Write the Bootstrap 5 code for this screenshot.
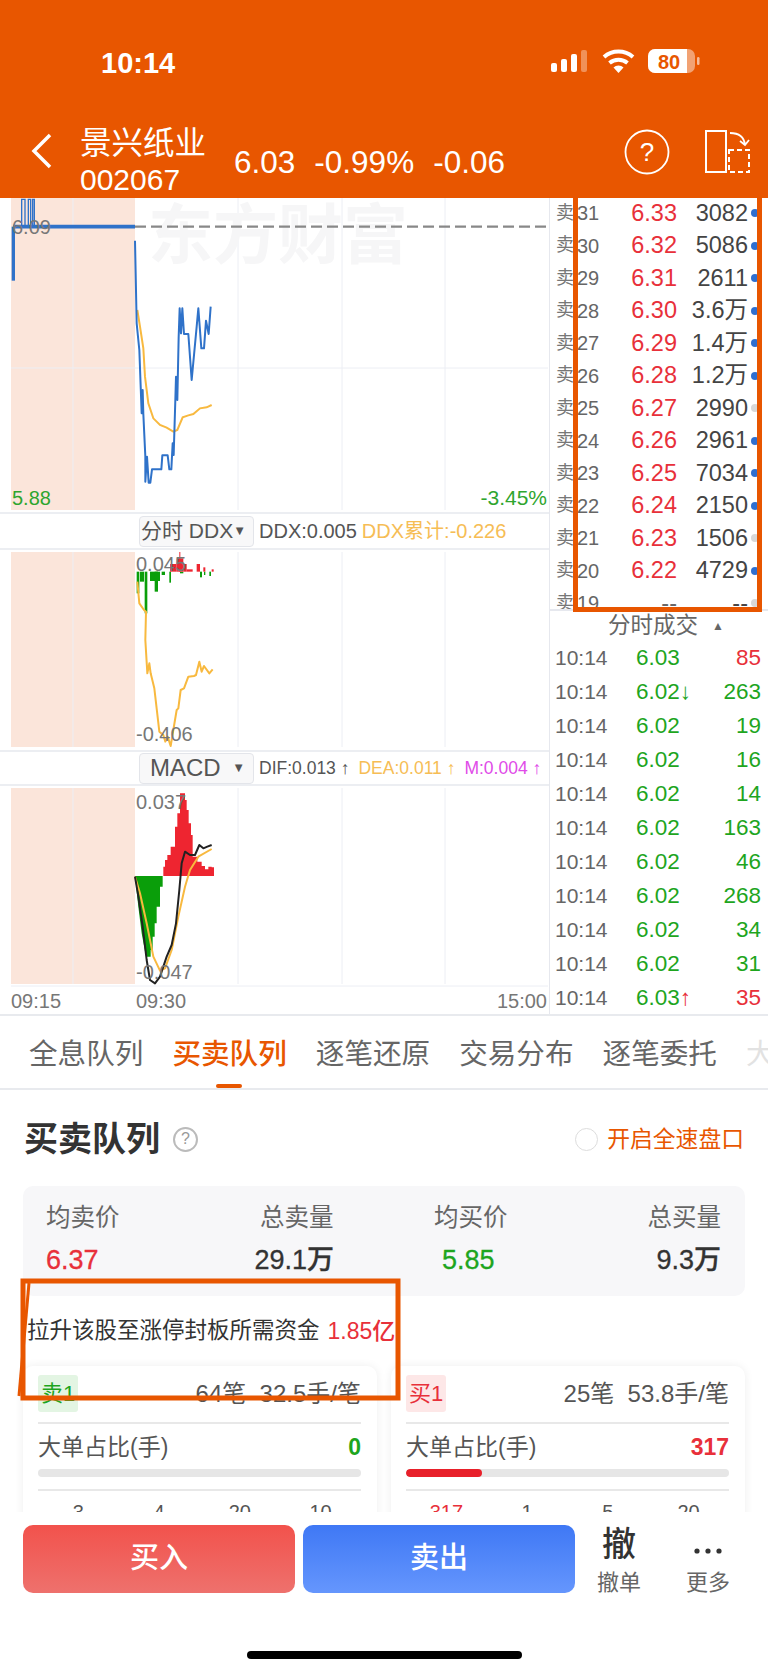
<!DOCTYPE html>
<html lang="zh">
<head>
<meta charset="utf-8">
<title>景兴纸业</title>
<link href="https://cdn.jsdelivr.net/npm/bootstrap@5.3.0/dist/css/bootstrap.min.css" rel="stylesheet">
<style>
html,body{margin:0;background:#fff}
body{font-family:"Liberation Sans","Noto Sans CJK SC",sans-serif;color:#333}
.app{width:768px;height:1672px;overflow:hidden;position:relative;background:#fff}
.hdr{height:198px;background:#e85600;color:#fff;flex:none}
.stbar{height:125px;padding:47px 0 0 101px}
.clock{font-size:29px;font-weight:700;line-height:32px;width:85px}
.status-icons{margin-right:62px}
.navline{height:73px;padding-left:30px}
.stk-name{font-size:31.5px;line-height:42px;margin-top:-3px}
.stk-code{font-size:30px;line-height:30px;margin-top:1px}
.stk-nums{font-size:31.500px;margin-left:28px;gap:19px;padding-top:14px}
.nav-tools{margin-right:18px;margin-top:3px}
.quotes{height:816px;flex:none}
.leftcol{width:549px;flex:none}
.rightcol{width:219px;flex:none;border-left:1px solid #e6e8ee}
.plot{display:block;width:548px}
.indbar{border-top:2px solid #eceef2;border-bottom:2px solid #eceef2;gap:5px;padding-left:139px;font-size:20px;white-space:nowrap}
.indbar-a{height:38px}
.indbar-b{height:36px;font-size:17.5px}
.dropbtn{width:115px;height:31px;border:1px solid #e3e5ea;background:#f8f8f9;border-radius:4px;font-size:21px;color:#555;padding:0 8px 0 1px}
.dropbtn i{font-style:normal;font-size:13px;color:#555}
.macd-t{font-size:24px;padding-left:9px}
.c-gold{color:#f6bd55}.c-mag{color:#e04be8}.c-dim{color:#555}
.ind-gap{gap:9px}
.book{height:413px;overflow:hidden;border-bottom:2px solid #e6e8ee}
.bk-row{height:32.5px;font-size:23.5px;white-space:nowrap;color:#444;padding-left:6px;position:relative;top:-1px}
.bk-s{width:21px;font-size:18px;color:#777}
.bk-n{width:30px;font-size:20px;color:#666}
.bk-p{width:70px;text-align:right;color:#e8303a}
.bk-v{width:71px;text-align:right}
.bk-d{width:8px;height:8px;border-radius:50%;background:#2f6fd0;margin-left:3px}
.bk-d.off{background:#d8d8d8}
.bk-none{color:#666}
.tr-head{height:30px;font-size:22.5px;color:#666;gap:14px;padding-left:14px}
.tr-head i{font-style:normal;font-size:12px}
.tr-row{height:34px;font-size:22.500px;white-space:nowrap;padding:0 7px 0 5px}
.tr-t{width:81px;color:#666;font-size:21px}
.tr-p{color:#1ea51e}
.tr-v{text-align:right}
.c-up{color:#e8303a}.c-dn{color:#1ea51e}
.lower{height:498px;overflow:hidden;flex:none;border-top:2px solid #e8eaee}
.tabs{height:74px;border-bottom:2px solid #e8eaee;padding:5px 0 0 29px;gap:29px;font-size:28.6px;color:#666;white-space:nowrap;overflow:hidden;position:relative}
.tab-on{color:#e85600;font-weight:500;position:relative}
.tab-on::after{content:"";position:absolute;left:44px;bottom:-12px;width:26px;height:4px;border-radius:2px;background:#e85600}
.tab-fade{color:#e2e2e2}
.secrow{height:50px;margin:24px 24px 22px 24px}
.sec-h{font-size:34px;font-weight:700;color:#333;line-height:50px}
.qmark{width:25px;height:25px;border:2px solid #bbb;border-radius:50%;font-size:16px;color:#999;margin-left:13px}
.radio-o{width:23px;height:23px;border:1.5px solid #ddd;border-radius:50%;margin-right:9px}
.fast{font-size:22.8px;color:#e85600}
.stat{height:110px;margin:0 23px;background:#f7f7f9;border-radius:10px;padding:16px 24px 0 23px}
.st-a{width:214px}.st-b{width:174px}.st-c{width:213px}.st-d{width:74px}
.st-l{font-size:24.5px;color:#666;line-height:32px;white-space:nowrap}
.st-v{font-size:27px;font-weight:500;line-height:34px;margin-top:9px;-webkit-text-stroke:.3px currentColor;white-space:nowrap}
.st-mid{margin-left:-10px;width:84px}
.pull{height:70px;padding-left:27px;font-size:22.5px;color:#333}
.pull b{color:#e8303a;font-weight:500;margin-left:8px;font-size:23px}
.duo{gap:14px;padding:0 23px}
.qcard{width:354px;height:170px;background:#fff;border-radius:10px;box-shadow:0 0 10px rgba(0,0,0,.07);padding:10px 16px 0 15px}
.qc-top{height:48px;border-bottom:2px solid #e8e8e8;padding-bottom:11px;font-size:24px;line-height:30px;color:#555}
.qtag{width:40px;height:37px;border-radius:3px;font-size:22px}
.qtag-s{background:#e3f5e3;color:#1ea51e}
.qtag-b{background:#fde7e7;color:#e8303a}
.qc-mid{height:46px;font-size:23px;line-height:30px;color:#555}
.qc-mid b{font-weight:700;font-size:23px}
.qbar{height:8px;background:#e6e6e6;border-radius:4px;overflow:hidden;margin-top:-1px}
.qbar div{height:8px;background:#e8202a;border-radius:4px}
.qc-rule{border-top:2px solid #e8e8e8;margin-top:12px;padding-top:6px;font-size:20px;color:#555}
.qc-rule span{width:25%;text-align:center}
.foot{height:160px;flex:none;background:#fff;padding:13px 0 0 23px}
.act{width:272px;height:68px;border-radius:10px;color:#fff;font-size:29px;font-weight:500;border:0}
.act-r{background:linear-gradient(#f2524c,#ee716d)}
.act-b{background:linear-gradient(#3f78f5,#6596fd);margin-left:8px}
.foot-i{color:#666;font-size:22px;line-height:28px;text-align:center;white-space:nowrap}
.foot-i strong{display:block;font-size:34px;line-height:38px;color:#333;font-weight:500;height:44px}
.fi-1{width:60px;margin-left:14px}
.fi-2{width:60px;margin-left:29px}
.home{width:275px;height:8px;border-radius:4px;background:#000;margin:54px 0 0 224px}
.mark-box{position:absolute;left:573px;top:190px;width:189px;height:422px;border:5px solid #e85600;border-top:0;pointer-events:none}
.mark-svg{position:absolute;left:0;top:1270px;pointer-events:none}
svg text{font-family:"Liberation Sans","Noto Sans CJK SC",sans-serif}
</style>
</head>
<body>
<div class="app d-flex flex-column">
  <header class="hdr">
    <div class="stbar d-flex">
      <div class="clock">10:14</div>
      <svg class="ms-auto status-icons" width="155" height="32" viewBox="0 0 155 32">
        <g fill="#fff"><rect x="0" y="16" width="6" height="9" rx="2"/><rect x="10" y="12" width="6" height="13" rx="2"/><rect x="20" y="7" width="6" height="18" rx="2"/><rect x="30" y="3" width="6" height="22" rx="2" opacity=".35"/></g>
        <g fill="none" stroke="#fff" stroke-width="4" stroke-linecap="butt"><path d="M53 10a22 22 0 0 1 29 0"/><path d="M58.500 16a14 14 0 0 1 18 0"/></g>
        <path d="M62.500 20.500a7 7 0 0 1 10 0L67.500 26z" fill="#fff"/>
        <rect x="97" y="2" width="47" height="24" rx="7" fill="#fff" opacity=".45"/>
        <path d="M104 2h32v24h-32a7 7 0 0 1-7-7V9a7 7 0 0 1 7-7z" fill="#fff"/>
        <rect x="146" y="10" width="2.500" height="8" rx="1.200" fill="#fff" opacity=".6"/>
        <text x="118" y="22" font-size="20" font-weight="700" fill="#e85600" text-anchor="middle">80</text>
      </svg>
    </div>
    <div class="navline d-flex">
      <svg width="22" height="36" viewBox="0 0 22 36" class="mt-2"><path d="M20 2 4 18l16 16" fill="none" stroke="#fff" stroke-width="3.500"/></svg>
      <div class="ms-4 ps-1">
        <div class="stk-name">景兴纸业</div>
        <div class="stk-code">002067</div>
      </div>
      <div class="stk-nums d-flex"><span>6.03</span><span>-0.99%</span><span>-0.06</span></div>
      <svg class="ms-auto nav-tools" width="128" height="50" viewBox="0 0 128 50">
        <circle cx="25" cy="24" r="21.500" fill="none" stroke="#fff" stroke-width="1.800"/>
        <text x="25" y="33" font-size="26" fill="#fff" text-anchor="middle">?</text>
        <rect x="84" y="3" width="20" height="41" fill="none" stroke="#fff" stroke-width="2"/>
        <rect x="107" y="22" width="20" height="22" fill="none" stroke="#fff" stroke-width="2" stroke-dasharray="5 3"/>
        <path d="M108 5c8 0 14 3 15 12m-5-4 5 4 4-5" fill="none" stroke="#fff" stroke-width="1.800"/>
      </svg>
    </div>
  </header>

  <section class="quotes d-flex">
    <div class="leftcol">
      <svg class="plot" height="314" viewBox="0 24 1644 942">
        <rect x="33" y="24" width="372" height="936" fill="#fbe5da"/>
        <g stroke="#eceef4" stroke-width="3"><path d="M219 24V960M714 24V960M1026 24V960M1335 24V960M33 534H1644"/></g>
        <text x="444" y="204" font-size="195" font-weight="700" fill="#f6f6f7">东方财富</text>
        <path d="M405 110H1644" stroke="#888" stroke-width="7" stroke-dasharray="33 15"/>
        <path d="M40 110H405" stroke="#2f72c9" stroke-width="11"/>
        <path d="M40 272V110" stroke="#2f72c9" stroke-width="10" fill="none"/>
        <path d="M65 110V28H75V110M85 110V28H92V110M98 110V28H103V110" stroke="#2f72c9" stroke-width="4" fill="none"/>
        <polyline fill="none" stroke="#f8b93f" stroke-width="6" points="412,360 420,410 430,475 435,560 445,640 460,685 480,705 500,713 520,725 532,720 548,682 565,676 580,672 600,655 620,652 635,645"/>
        <polyline fill="none" stroke="#2f72c9" stroke-width="6" stroke-linejoin="round" points="405,152 410,400 418,480 425,670 428,600 430,672 436,800 436,875 441,800 446,878 451,878 456,838 484,838 487,796 503,796 508,838 514,838 518,760 521,795 526,630 528,560 532,630 536,440 539,355 543,430 547,355 552,432 565,432 575,570 590,410 595,355 604,475 612,475 618,392 626,432 632,350"/>
        <text x="36" y="131" font-size="60" fill="#777">6.09</text>
        <text x="36" y="945" font-size="60" fill="#2fa52f">5.88</text>
        <text x="1641" y="945" font-size="63" fill="#2fa52f" text-anchor="end">-3.45%</text>
      </svg>
      <div class="indbar indbar-a d-flex align-items-center">
        <div class="dropbtn d-flex align-items-center justify-content-between"><span>分时 DDX</span><i>▼</i></div>
        <span class="c-dim">DDX:0.005</span><span class="c-gold">DDX累计:-0.226</span>
      </div>
      <svg class="plot" height="200" viewBox="-360 30 1644 600">
        <rect x="-327" y="36" width="372" height="585" fill="#fbe5da"/>
        <g stroke="#eceef4" stroke-width="3"><path d="M-141 36V621M354 36V621M666 36V621M975 36V621"/></g>
        <g fill="#0a9e0a"><rect x="50" y="95" width="8" height="65"/><rect x="60" y="95" width="12" height="30"/><rect x="74" y="95" width="8" height="125"/><rect x="90" y="95" width="30" height="28"/><rect x="104" y="95" width="10" height="60"/><rect x="125" y="95" width="10" height="10"/><rect x="148" y="95" width="5" height="33"/><rect x="180" y="95" width="10" height="5"/><rect x="240" y="95" width="6" height="17"/><rect x="252" y="95" width="4" height="10"/><rect x="268" y="95" width="5" height="13"/></g>
        <g fill="#ee2530"><rect x="150" y="72" width="20" height="23"/><rect x="178" y="36" width="3" height="59"/><rect x="170" y="55" width="20" height="40"/><rect x="190" y="72" width="10" height="23"/><rect x="200" y="88" width="18" height="7"/><rect x="230" y="72" width="10" height="23"/><rect x="250" y="82" width="6" height="13"/><rect x="275" y="88" width="6" height="7"/></g>
        <polyline fill="none" stroke="#f8b93f" stroke-width="6" stroke-linejoin="round" points="52,125 58,190 72,210 78,215 76,300 82,400 88,370 92,400 103,445 118,575 130,585 136,605 143,590 152,618 160,570 170,510 175,505 182,450 192,445 205,410 222,408 228,405 238,365 245,395 252,378 268,400 278,388"/>
        <text x="48" y="93" font-size="60" fill="#777">0.045</text>
        <text x="48" y="603" font-size="60" fill="#777">-0.406</text>
      </svg>
      <div class="indbar indbar-b d-flex align-items-center">
        <div class="dropbtn d-flex align-items-center justify-content-between"><span class="macd-t">MACD</span><i>▼</i></div>
        <div class="d-flex ind-gap"><span class="c-dim">DIF:0.013 ↑</span><span class="c-gold">DEA:0.011 ↑</span><span class="c-mag">M:0.004 ↑</span></div>
      </div>
      <svg class="plot" height="228" viewBox="-360 18 1644 684">
        <rect x="-327" y="24" width="372" height="588" fill="#fbe5da"/>
        <g stroke="#eceef4" stroke-width="3"><path d="M-141 24V612M354 24V612M666 24V612M975 24V612M-327 618H1284"/></g>
        <path fill="#0a9e0a" d="M45 288H128V320H120V380H110V430H104V470H98V510H92V530H78L65 460 55 380Z"/>
        <path fill="#ee2530" d="M130 288V260H135V240H142V225H152V200H165V140H172V100H180V40H195V60H200V90H206V130H213V165H218V230H232V245H245V258H255V268H265V260H275V262H282V288Z"/>
        <polyline fill="none" stroke="#f8b93f" stroke-width="6" stroke-linejoin="round" points="45,290 60,340 80,430 100,530 120,572 135,565 155,510 175,410 195,320 210,270 235,230 275,207"/>
        <polyline fill="none" stroke="#222" stroke-width="6" stroke-linejoin="round" points="45,290 55,350 68,440 80,540 90,600 105,610 120,590 140,530 155,495 168,430 178,330 185,250 195,215 210,225 225,225 238,195 250,205 262,200 275,195"/>
        <text x="48" y="86" font-size="60" fill="#777">0.037</text>
        <text x="48" y="596" font-size="60" fill="#777">-0.047</text>
        <text x="-327" y="684" font-size="60" fill="#777">09:15</text>
        <text x="48" y="684" font-size="60" fill="#777">09:30</text>
        <text x="1281" y="684" font-size="60" fill="#777" text-anchor="end">15:00</text>
      </svg>
    </div>
    <div class="rightcol">
      <div class="book">
        <div class="bk-row d-flex align-items-center"><span class="bk-s">卖</span><span class="bk-n">31</span><span class="bk-p">6.33</span><span class="bk-v">3082</span><span class="bk-d"></span></div>
        <div class="bk-row d-flex align-items-center"><span class="bk-s">卖</span><span class="bk-n">30</span><span class="bk-p">6.32</span><span class="bk-v">5086</span><span class="bk-d"></span></div>
        <div class="bk-row d-flex align-items-center"><span class="bk-s">卖</span><span class="bk-n">29</span><span class="bk-p">6.31</span><span class="bk-v">2611</span><span class="bk-d"></span></div>
        <div class="bk-row d-flex align-items-center"><span class="bk-s">卖</span><span class="bk-n">28</span><span class="bk-p">6.30</span><span class="bk-v">3.6万</span><span class="bk-d"></span></div>
        <div class="bk-row d-flex align-items-center"><span class="bk-s">卖</span><span class="bk-n">27</span><span class="bk-p">6.29</span><span class="bk-v">1.4万</span><span class="bk-d"></span></div>
        <div class="bk-row d-flex align-items-center"><span class="bk-s">卖</span><span class="bk-n">26</span><span class="bk-p">6.28</span><span class="bk-v">1.2万</span><span class="bk-d"></span></div>
        <div class="bk-row d-flex align-items-center"><span class="bk-s">卖</span><span class="bk-n">25</span><span class="bk-p">6.27</span><span class="bk-v">2990</span><span class="bk-d off"></span></div>
        <div class="bk-row d-flex align-items-center"><span class="bk-s">卖</span><span class="bk-n">24</span><span class="bk-p">6.26</span><span class="bk-v">2961</span><span class="bk-d"></span></div>
        <div class="bk-row d-flex align-items-center"><span class="bk-s">卖</span><span class="bk-n">23</span><span class="bk-p">6.25</span><span class="bk-v">7034</span><span class="bk-d"></span></div>
        <div class="bk-row d-flex align-items-center"><span class="bk-s">卖</span><span class="bk-n">22</span><span class="bk-p">6.24</span><span class="bk-v">2150</span><span class="bk-d"></span></div>
        <div class="bk-row d-flex align-items-center"><span class="bk-s">卖</span><span class="bk-n">21</span><span class="bk-p">6.23</span><span class="bk-v">1506</span><span class="bk-d off"></span></div>
        <div class="bk-row d-flex align-items-center"><span class="bk-s">卖</span><span class="bk-n">20</span><span class="bk-p">6.22</span><span class="bk-v">4729</span><span class="bk-d"></span></div>
        <div class="bk-row d-flex align-items-center"><span class="bk-s">卖</span><span class="bk-n">19</span><span class="bk-p bk-none">--</span><span class="bk-v">--</span><span class="bk-d off"></span></div>
      </div>
      <div class="tr-head d-flex align-items-center justify-content-center"><span>分时成交</span><i>▲</i></div>
      <div class="tr-row d-flex align-items-center"><span class="tr-t">10:14</span><span class="tr-p">6.03</span><span class="tr-v c-up ms-auto">85</span></div>
      <div class="tr-row d-flex align-items-center"><span class="tr-t">10:14</span><span class="tr-p">6.02↓</span><span class="tr-v c-dn ms-auto">263</span></div>
      <div class="tr-row d-flex align-items-center"><span class="tr-t">10:14</span><span class="tr-p">6.02</span><span class="tr-v c-dn ms-auto">19</span></div>
      <div class="tr-row d-flex align-items-center"><span class="tr-t">10:14</span><span class="tr-p">6.02</span><span class="tr-v c-dn ms-auto">16</span></div>
      <div class="tr-row d-flex align-items-center"><span class="tr-t">10:14</span><span class="tr-p">6.02</span><span class="tr-v c-dn ms-auto">14</span></div>
      <div class="tr-row d-flex align-items-center"><span class="tr-t">10:14</span><span class="tr-p">6.02</span><span class="tr-v c-dn ms-auto">163</span></div>
      <div class="tr-row d-flex align-items-center"><span class="tr-t">10:14</span><span class="tr-p">6.02</span><span class="tr-v c-dn ms-auto">46</span></div>
      <div class="tr-row d-flex align-items-center"><span class="tr-t">10:14</span><span class="tr-p">6.02</span><span class="tr-v c-dn ms-auto">268</span></div>
      <div class="tr-row d-flex align-items-center"><span class="tr-t">10:14</span><span class="tr-p">6.02</span><span class="tr-v c-dn ms-auto">34</span></div>
      <div class="tr-row d-flex align-items-center"><span class="tr-t">10:14</span><span class="tr-p">6.02</span><span class="tr-v c-dn ms-auto">31</span></div>
      <div class="tr-row d-flex align-items-center"><span class="tr-t">10:14</span><span class="tr-p">6.03<span class="c-up">↑</span></span><span class="tr-v c-up ms-auto">35</span></div>
    </div>
  </section>

  <section class="lower">
    <nav class="tabs d-flex align-items-center">
      <span>全息队列</span><span class="tab-on">买卖队列</span><span>逐笔还原</span><span>交易分布</span><span>逐笔委托</span><span class="tab-fade">大单</span>
    </nav>
    <div class="secrow d-flex align-items-center">
      <span class="sec-h">买卖队列</span>
      <span class="qmark d-flex align-items-center justify-content-center">?</span>
      <span class="radio-o ms-auto"></span><span class="fast">开启全速盘口</span>
    </div>
    <div class="stat d-flex">
      <div class="st-a"><div class="st-l">均卖价</div><div class="st-v c-up">6.37</div></div>
      <div class="st-b"><div class="st-l">总卖量</div><div class="st-v st-mid text-end">29.1万</div></div>
      <div class="st-c"><div class="st-l">均买价</div><div class="st-v c-dn ms-2">5.85</div></div>
      <div class="st-d text-end"><div class="st-l">总买量</div><div class="st-v">9.3万</div></div>
    </div>
    <div class="pull d-flex align-items-center"><span>拉升该股至涨停封板所需资金</span><b>1.85亿</b></div>
    <div class="duo d-flex">
      <div class="qcard">
        <div class="qc-top d-flex align-items-center justify-content-between"><span class="qtag qtag-s d-flex align-items-center justify-content-center">卖1</span><span>64笔&nbsp;&nbsp;32.5手/笔</span></div>
        <div class="qc-mid d-flex align-items-center justify-content-between"><span>大单占比(手)</span><b class="c-dn">0</b></div>
        <div class="qbar"></div>
        <div class="qc-rule d-flex"><span>3</span><span>4</span><span>20</span><span>10</span></div>
      </div>
      <div class="qcard">
        <div class="qc-top d-flex align-items-center justify-content-between"><span class="qtag qtag-b d-flex align-items-center justify-content-center">买1</span><span>25笔&nbsp;&nbsp;53.8手/笔</span></div>
        <div class="qc-mid d-flex align-items-center justify-content-between"><span>大单占比(手)</span><b class="c-up">317</b></div>
        <div class="qbar"><div style="width:23.4%"></div></div>
        <div class="qc-rule d-flex"><span class="c-up">317</span><span>1</span><span>5</span><span>20</span></div>
      </div>
    </div>
  </section>

  <footer class="foot">
    <div class="d-flex align-items-start">
      <button type="button" class="btn act act-r">买入</button>
      <button type="button" class="btn act act-b">卖出</button>
      <div class="foot-i fi-1"><strong>撤</strong>撤单</div>
      <div class="foot-i fi-2">
        <strong><svg width="30" height="8" viewBox="0 0 30 8" class="mt-2"><circle cx="4" cy="4" r="2.600" fill="#333"/><circle cx="15" cy="4" r="2.600" fill="#333"/><circle cx="26" cy="4" r="2.600" fill="#333"/></svg></strong>更多
      </div>
    </div>
    <div class="home"></div>
  </footer>

  <div class="mark-box"></div>
  <svg class="mark-svg" width="420" height="140" viewBox="0 1270 420 140">
    <path d="M23 1281H398V1398H23Z" fill="none" stroke="#e85600" stroke-width="5"/>
    <path d="M29 1283 19 1396" fill="none" stroke="#e85600" stroke-width="3"/>
  </svg>
</div>
<script src="https://cdn.jsdelivr.net/npm/bootstrap@5.3.0/dist/js/bootstrap.bundle.min.js"></script>
</body>
</html>
